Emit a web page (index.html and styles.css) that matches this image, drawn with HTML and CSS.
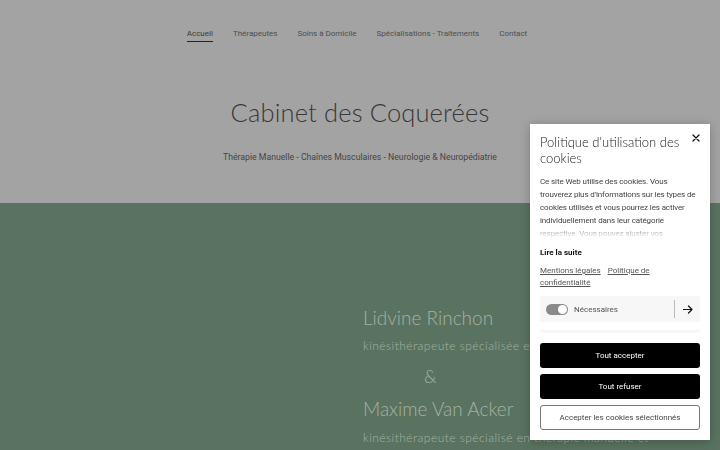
FILE: index.html
```html
<!DOCTYPE html>
<html lang="fr">
<head>
<meta charset="utf-8">
<title>Cabinet des Coquerées</title>
<link rel="stylesheet" href="styles.css">
</head>
<body>
<header class="header">
  <nav class="nav">
    <a class="nav-link active" href="#">Accueil</a>
    <a class="nav-link" href="#">Thérapeutes</a>
    <a class="nav-link" href="#">Soins à Domicile</a>
    <a class="nav-link" href="#">Spécialisations - Traitements</a>
    <a class="nav-link" href="#">Contact</a>
  </nav>
  <h1 class="title">Cabinet des Coquerées</h1>
  <p class="subtitle">Thérapie Manuelle - Chaînes Musculaires - Neurologie &amp; Neuropédiatrie</p>
</header>
<main class="hero">
  <div class="hero-media"></div>
  <div class="hero-text">
    <h2 class="name">Lidvine Rinchon</h2>
    <p class="role">kinésithérapeute spécialisée en thérapie manuelle</p>
    <p class="amp">&amp;</p>
    <h2 class="name">Maxime Van Acker</h2>
    <p class="role">kinésithérapeute spécialisé en thérapie manuelle et</p>
  </div>
</main>

<aside class="cookie">
  <button class="cookie-close" aria-label="Fermer">
    <svg width="8" height="8" viewBox="0 0 8 8"><path d="M1 1L7 7M7 1L1 7" stroke="#111" stroke-width="1.3" stroke-linecap="round"/></svg>
  </button>
  <h3 class="cookie-title">Politique d'utilisation des cookies</h3>
  <div class="cookie-scroll">
    <p class="cookie-text">Ce site Web utilise des cookies. Vous trouverez plus d'informations sur les types de cookies utilisés et vous pourrez les activer individuellement dans leur catégorie respective. Vous pouvez ajuster vos préférences à tout moment.</p>
    <p class="cookie-more">Lire la suite</p>
    <p class="cookie-links"><a href="#">Mentions légales</a><a href="#">Politique de confidentialité</a></p>
    <div class="cookie-row">
      <span class="toggle"><span class="knob"></span></span>
      <span class="row-label">Nécessaires</span>
      <span class="row-sep"></span>
      <svg class="row-arrow" width="10" height="9" viewBox="0 0 10 9"><path d="M0.5 4.5H9M5.5 1L9 4.5L5.5 8" fill="none" stroke="#111" stroke-width="1.2" stroke-linecap="round" stroke-linejoin="round"/></svg>
    </div>
    <div class="cookie-row">
      <span class="toggle"><span class="knob"></span></span>
      <span class="row-label">Statistiques</span>
      <span class="row-sep"></span>
    </div>
  </div>
  <div class="cookie-actions">
    <button class="btn btn-dark">Tout accepter</button>
    <button class="btn btn-dark">Tout refuser</button>
    <button class="btn btn-light">Accepter les cookies sélectionnés</button>
  </div>
</aside>
</body>
</html>
```

FILE: styles.css
```css
* { box-sizing: border-box; }
html, body { height: 100%; }
body {
  margin: 0;
  font-family: Roboto, "Liberation Sans", sans-serif;
  background: #5a7360;
  overflow: hidden;
}
.header {
  height: 203px;
  background: #a3a3a3;
  padding-top: 28px;
  text-align: center;
}
.nav {
  display: flex;
  justify-content: center;
  gap: 20px;
  margin-left: -6px;
}
.nav-link {
  font-size: 8px;
  line-height: 12px;
  color: #4e4e4e;
  text-decoration: none;
  padding-bottom: 1px;
  border-bottom: 1px solid transparent;
}
.nav-link.active {
  color: #3a3a3a;
  border-bottom-color: #222;
}
.title {
  margin: 55px 0 0;
  font-family: Lato, "Open Sans", sans-serif;
  font-weight: 300;
  font-size: 25.5px;
  line-height: 30px;
  color: #383838;
  letter-spacing: 0.15px;
}
.subtitle {
  margin: 24px 0 0;
  font-size: 8.7px;
  line-height: 12px;
  color: #454545;
}
.hero {
  display: grid;
  grid-template-columns: 363px 1fr;
  height: 247px;
  padding-top: 103px;
  overflow: hidden;
}
.hero-text {
  font-family: Lato, "Open Sans", sans-serif;
  font-weight: 300;
  color: #a5b1a6;
  white-space: nowrap;
}
.name {
  margin: 0;
  font-weight: 300;
  font-size: 19px;
  line-height: 23px;
}
.role {
  margin: 8px 0 0;
  font-size: 12px;
  line-height: 18px;
  letter-spacing: 0.45px;
}
.amp {
  margin: 10px 0 0 61px;
  font-size: 18px;
  line-height: 22px;
}
.amp + .name { margin-top: 10px; }
.amp + .name + .role { margin-top: 9px; }
.cookie {
  position: fixed;
  top: 124px;
  right: 10px;
  width: 180px;
  height: 316px;
  background: #fff;
  box-shadow: 0 2px 10px rgba(0,0,0,0.25);
  padding: 10px;
  display: flex;
  flex-direction: column;
}
.cookie-close {
  position: absolute;
  top: 9px;
  right: 9px;
  width: 10px;
  height: 10px;
  padding: 0;
  border: 0;
  background: none;
  display: flex;
  align-items: center;
  justify-content: center;
}
.cookie-title {
  margin: 0;
  padding-right: 20px;
  font-family: Lato, "Open Sans", sans-serif;
  font-weight: 300;
  font-size: 13px;
  line-height: 16px;
  color: #222;
}
.cookie-scroll {
  flex: 1;
  overflow: hidden;
  margin-top: 9px;
}
.cookie-text {
  margin: 0;
  font-size: 8px;
  line-height: 13px;
  letter-spacing: -0.12px;
  color: #444;
  max-height: 65px;
  overflow: hidden;
  -webkit-mask-image: linear-gradient(to bottom, #000 50px, rgba(0,0,0,0.2) 60px, transparent 65px);
  mask-image: linear-gradient(to bottom, #000 50px, rgba(0,0,0,0.2) 60px, transparent 65px);
}
.cookie-more {
  margin: 7px 0 0;
  font-size: 8px;
  line-height: 12px;
  font-weight: 700;
  color: #111;
}
.cookie-links {
  margin: 6px 0 0;
  font-size: 8px;
  line-height: 12px;
}
.cookie-links a {
  color: #555;
  text-decoration: underline;
  margin-right: 7px;
}
.cookie-row {
  margin-top: 7px;
  height: 26px;
  background: #f7f7f7;
  display: flex;
  align-items: center;
  padding: 0 6px;
}
.cookie-row + .cookie-row { margin-top: 8px; }
.toggle {
  width: 22px;
  height: 11px;
  border-radius: 6px;
  background: #8a8a8a;
  display: flex;
  justify-content: flex-end;
  align-items: center;
  padding: 1px;
}
.knob {
  width: 9px;
  height: 9px;
  border-radius: 50%;
  background: #fff;
}
.row-label {
  margin-left: 6px;
  font-size: 8px;
  color: #555;
  flex: 1;
}
.row-sep {
  width: 1px;
  height: 18px;
  background: #bbb;
  margin-right: 8px;
}
.row-arrow { display: block; margin-right: 1px; }
.cookie-actions {
  display: flex;
  flex-direction: column;
  gap: 6px;
  margin-top: 10px;
}
.btn {
  height: 25px;
  border-radius: 3px;
  font-family: Roboto, "Liberation Sans", sans-serif;
  font-size: 8px;
  padding: 0;
}
.btn-dark {
  background: #000;
  color: #fff;
  border: 0;
}
.btn-light {
  background: #fff;
  color: #444;
  border: 1px solid #777;
}
```
